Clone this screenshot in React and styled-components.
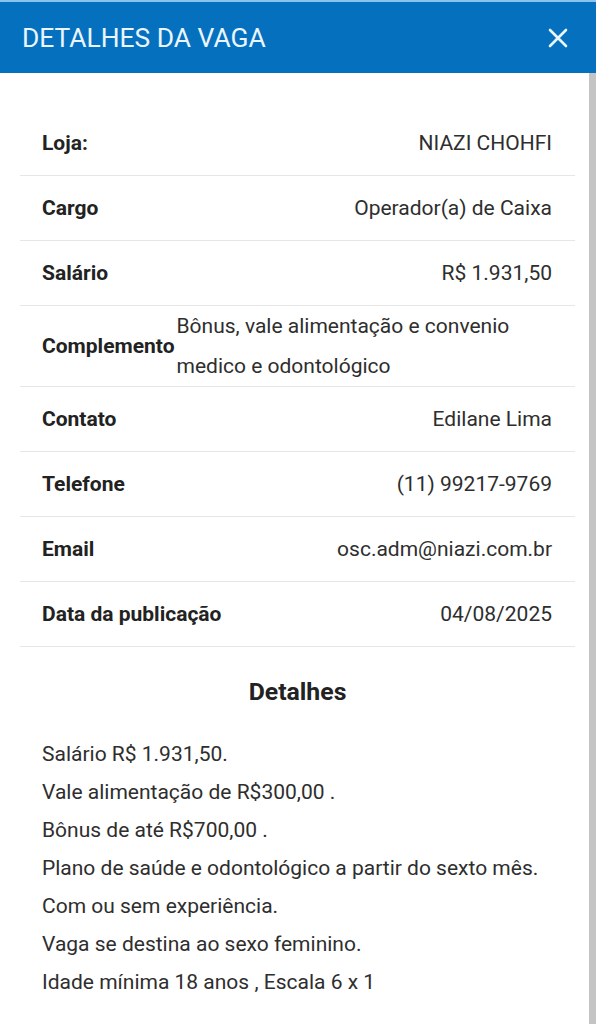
import React from 'react'
import styled, { createGlobalStyle } from 'styled-components'

const GlobalStyle = createGlobalStyle`
    html, body {
        margin: 0;
        padding: 0;
        background: #ffffff;
        font-family: Roboto, "Liberation Sans", Arial, sans-serif;
        overflow: hidden;
    }
`

const Modal = styled.div`
    position: relative;
    width: 596px;
    height: 1024px;
    background: #fff;
    overflow: hidden;
`

const Header = styled.div`
    box-sizing: border-box;
    height: 73px;
    background-color: #0570bd;
    border-top: 2px solid #8cc3ec;
    display: flex;
    align-items: center;
    justify-content: space-between;
    padding: 0 27px 0 22px;
`

const Title = styled.h1`
    margin: 0;
    font-size: 26.4px;
    font-weight: 400;
    color: #eaf5ff;
`

const Close = styled.button`
    border: none;
    background: none;
    padding: 0;
    width: 22px;
    height: 22px;
    cursor: pointer;
    display: flex;
`

const Scrollbar = styled.div`
    position: absolute;
    right: 0;
    top: 73px;
    bottom: 0;
    width: 7px;
    background: #c4c4c4;
`

const Body = styled.div`
    padding: 38px 21px 0 20px;
`

const Row = styled.div`
    display: flex;
    justify-content: space-between;
    align-items: center;
    min-height: 64px;
    padding: 0 23px 0 22px;
    border-bottom: 1px solid #e6e6e6;
    font-size: 21px;
`

const Label = styled.span`
    font-weight: 700;
    color: #222;
    white-space: nowrap;
`

const Value = styled.span`
    color: #2e2e2e;
    line-height: 40px;
    text-align: ${p => (p.$wrap ? 'left' : 'right')};
    padding-left: ${p => (p.$wrap ? '2px' : '0')};
`

const Heading = styled.h2`
    margin: 30px 0 29px;
    text-align: center;
    font-size: 24.8px;
    font-weight: 700;
    color: #222;
`

const Lines = styled.div`
    padding: 0 22px;
`

const Line = styled.p`
    margin: 0;
    font-size: 21px;
    line-height: 38px;
    color: #2e2e2e;
`

const rows = [
    ['Loja:', 'NIAZI CHOHFI'],
    ['Cargo', 'Operador(a) de Caixa'],
    ['Salário', 'R$ 1.931,50'],
    ['Complemento', 'Bônus, vale alimentação e convenio medico e odontológico', true],
    ['Contato', 'Edilane Lima'],
    ['Telefone', '(11) 99217-9769'],
    ['Email', 'osc.adm@niazi.com.br'],
    ['Data da publicação', '04/08/2025'],
]

const detalhes = [
    'Salário R$ 1.931,50.',
    'Vale alimentação de R$300,00 .',
    'Bônus de até R$700,00 .',
    'Plano de saúde e odontológico a partir do sexto mês.',
    'Com ou sem experiência.',
    'Vaga se destina ao sexo feminino.',
    'Idade mínima 18 anos , Escala 6 x 1',
]

export default function App() {
    return (
        <Modal>
            <GlobalStyle />
            <Header>
                <Title>DETALHES DA VAGA</Title>
                <Close aria-label="Fechar">
                    <svg width="22" height="22" viewBox="0 0 22 22">
                        <path d="M3 3 L19 19 M19 3 L3 19" stroke="#eaf5ff" strokeWidth="2.6" strokeLinecap="round" />
                    </svg>
                </Close>
            </Header>
            <Body>
                {rows.map(([label, value, wrap]) => (
                    <Row key={label}>
                        <Label>{label}</Label>
                        <Value $wrap={wrap}>{value}</Value>
                    </Row>
                ))}
                <Heading>Detalhes</Heading>
                <Lines>
                    {detalhes.map(t => <Line key={t}>{t}</Line>)}
                </Lines>
            </Body>
            <Scrollbar />
        </Modal>
    )
}
